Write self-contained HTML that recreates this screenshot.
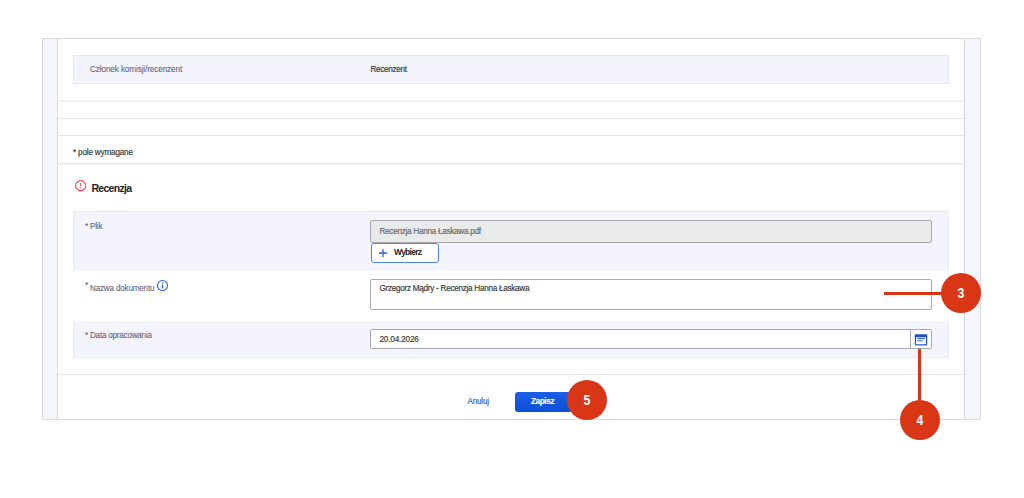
<!DOCTYPE html>
<html lang="pl">
<head>
<meta charset="utf-8">
<title>Recenzja</title>
<style>
html,body{margin:0;padding:0;background:#fff;}
body{width:1024px;height:498px;position:relative;overflow:hidden;font-family:"Liberation Sans",sans-serif;color:#333;}
.abs{position:absolute;}
.frame{left:42px;top:38px;width:937px;height:380px;border:1px solid #dadadf;background:#f5f6fb;}
.inner{left:57px;top:39px;width:906px;height:380px;border-left:1px solid #dadae0;border-right:1px solid #dadae0;background:#fff;}
.hl{left:58px;width:906px;height:1px;background:#e6e6ea;}
.row{left:73px;width:876px;background:#f4f4fd;}
.t{position:absolute;white-space:nowrap;line-height:1;transform-origin:0 50%;margin-top:1.2px;-webkit-text-stroke:0.15px currentColor;}
.lbl{color:#5d627c;-webkit-text-stroke:0.08px currentColor;}
.inp{border:1px solid #a9a9b2;border-radius:2px;box-sizing:border-box;background:#fff;}
.red span{display:inline-block;transform:scaleX(.88);}
.red{background:#d93616;border-radius:50%;width:40px;height:40px;color:#fff;font-weight:bold;font-size:14px;text-align:center;line-height:41px;}
</style>
</head>
<body>
<div class="abs frame"></div>
<div class="abs inner"></div>

<!-- row 1 -->
<div class="abs row" style="top:55px;height:29px;box-shadow:inset 0 0 0 1px #e6e6ef;"></div>
<span class="t lbl" id="t1" style="letter-spacing:-0.091px;left:90px;top:65px;font-size:8.15px;">Członek komisji/recenzent</span>
<span class="t" id="t2" style="letter-spacing:-0.305px;left:370.5px;top:65px;font-size:8.15px;">Recenzent</span>

<div class="abs hl" style="top:100px;height:2px;background:#f0f1f3;"></div>
<div class="abs hl" style="top:118px;"></div>
<div class="abs hl" style="top:135px;"></div>
<span class="t" id="t3" style="letter-spacing:-0.167px;left:73px;top:148px;font-size:8.15px;">* pole wymagane</span>
<div class="abs hl" style="top:163px;"></div><div class="abs hl" style="top:164px;background:#f4f4f7;"></div>

<!-- header -->
<svg class="abs" style="left:74.9px;top:180.2px;" width="11.4" height="11.4" viewBox="0 0 12 12">
  <polygon points="4,0.8 8,0.8 11.2,4 11.2,8 8,11.2 4,11.2 0.8,8 0.8,4" fill="none" stroke="#e0434f" stroke-width="1.1" stroke-linejoin="round"/>
  <rect x="5.5" y="3.2" width="1" height="3.6" fill="#e0434f"/>
  <rect x="5.5" y="7.8" width="1" height="1.1" fill="#e0434f"/>
</svg>
<span class="t" id="t4" style="letter-spacing:-0.719px;margin-top:0.2px;left:91.5px;top:183px;font-size:10.5px;font-weight:bold;-webkit-text-stroke:0;color:#222;">Recenzja</span>

<!-- form rows -->
<div class="abs row" style="top:211px;height:60px;box-sizing:border-box;border:1px solid #e9e9f2;border-bottom:0;"></div>
<div class="abs row" style="top:321px;height:37px;border:1px solid #e9e9f2;border-top:0;box-sizing:border-box;"></div>

<span class="t lbl" id="t5" style="letter-spacing:-0.203px;left:85px;top:221.5px;font-size:8.15px;">* Plik</span>
<span class="t lbl" id="t6" style="letter-spacing:-0.202px;left:85px;top:283.5px;font-size:8.15px;"><span style="position:relative;top:-2.5px;">*</span> Nazwa dokumentu</span>
<svg class="abs" style="left:156px;top:278.5px;" width="13" height="13" viewBox="0 0 13 13">
  <circle cx="6.5" cy="6.5" r="5" fill="none" stroke="#2a5fe0" stroke-width="1.05"/>
  <rect x="5.85" y="5.6" width="1.3" height="3.8" fill="#2a5fe0"/>
  <rect x="5.85" y="3.5" width="1.3" height="1.3" fill="#2a5fe0"/>
</svg>
<span class="t lbl" id="t7" style="letter-spacing:-0.231px;left:85px;top:330.5px;font-size:8.15px;">* Data opracowania</span>

<!-- file input -->
<div class="abs inp" style="left:370px;top:220px;width:562px;height:23px;background:#e9ebea;"></div>
<span class="t" id="t8" style="letter-spacing:-0.258px;left:379.5px;top:227px;font-size:8.15px;color:#666;">Recenzja Hanna Łaskawa.pdf</span>
<div class="abs" style="left:370.6px;top:243px;width:68.4px;height:20px;border:1.6px solid #4a82ee;border-radius:3px;box-sizing:border-box;background:#fff;"></div>
<svg class="abs" style="left:378px;top:247.5px;" width="10" height="10" viewBox="0 0 10 10"><path d="M5 1V9M1 5H9" stroke="#2a5fe0" stroke-width="1.3" fill="none"/></svg>
<span class="t" id="t9" style="letter-spacing:-0.74px;margin-top:0.1px;left:394px;top:248.2px;font-size:8.5px;font-weight:bold;-webkit-text-stroke:0;color:#222;">Wybierz</span>

<!-- textarea -->
<div class="abs inp" style="left:370px;top:279px;width:562px;height:31px;"></div>
<span class="t" id="t10" style="letter-spacing:-0.26px;left:379.5px;top:284px;font-size:8.15px;">Grzegorz Mądry - Recenzja Hanna Łaskawa</span>

<!-- date -->
<div class="abs inp" style="left:370px;top:329px;width:562px;height:20px;"></div>
<div class="abs" style="left:910px;top:330px;width:1px;height:18px;background:#a6a6ad;"></div>
<svg class="abs" style="left:914px;top:334px;" width="14" height="12" viewBox="0 0 14 12">
  <rect x="1.4" y="1.1" width="11.2" height="9.8" rx="0.6" fill="#fff" stroke="#2456d6" stroke-width="1.2"/>
  <rect x="0.8" y="0.5" width="12.4" height="2.7" rx="0.6" fill="#1a4fd6"/>
  <rect x="3.2" y="4.1" width="7.7" height="1" fill="#2456d6"/>
  <rect x="3.2" y="6.3" width="5.5" height="1" fill="#2456d6"/>
</svg>
<span class="t" id="t11" style="letter-spacing:-0.147px;left:379.5px;top:334.5px;font-size:8.15px;">20.04.2026</span>

<div class="abs hl" style="top:374px;"></div>

<!-- buttons -->
<span class="t" id="t12" style="letter-spacing:-0.219px;left:467.5px;top:396.5px;font-size:8.15px;color:#2a5bd7;">Anuluj</span>
<div class="abs" style="left:514.5px;top:391.5px;width:57px;height:20px;border-radius:3px;background:linear-gradient(#1c5fe6,#0c4fd8);"></div>
<span class="t" id="t13" style="letter-spacing:-0.397px;margin-top:1.9px;left:531px;top:396.5px;font-size:8.2px;font-weight:bold;color:#fff;">Zapisz</span>

<!-- annotations -->
<div class="abs" style="left:883.5px;top:291.7px;width:60px;height:3px;background:#d93616;"></div>
<div class="abs red" style="left:941px;top:273px;"><span>3</span></div>
<div class="abs" style="left:918.1px;top:349px;width:3px;height:55px;background:#d93616;"></div>
<div class="abs red" style="left:899.8px;top:399.9px;"><span>4</span></div>
<div class="abs red" style="left:566.75px;top:380px;"><span>5</span></div>
</body>
</html>
